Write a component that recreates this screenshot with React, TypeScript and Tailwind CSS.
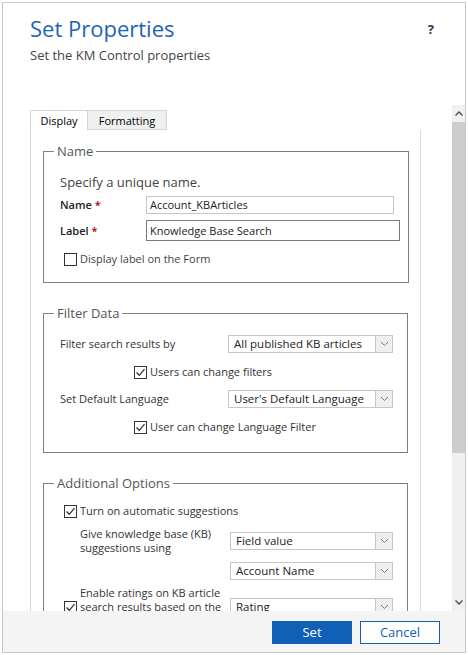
import React from 'react';

const Check = ({ checked }: { checked: boolean }) => (
    <span className="w-[13px] h-[13px] border border-[#333] bg-white flex items-center justify-center shrink-0">
        {checked && (
            <svg width="11" height="11" viewBox="0 0 11 11">
                <path d="M1.5 5.5 L4.3 8.3 L9.5 2.2" fill="none" stroke="#333" strokeWidth="1.3" />
            </svg>
        )}
    </span>
);

const Select = ({ value, className = '' }: { value: string; className?: string }) => (
    <div className={`flex h-[18px] border border-[#c6c6c6] bg-white ${className}`}>
        <span className="flex-1 pl-[5px] text-[11.5px] leading-[16px] text-[#222] truncate">{value}</span>
        <span className="w-[17px] border-l border-[#c6c6c6] bg-[#efefef] flex items-center justify-center">
            <svg width="9" height="6" viewBox="0 0 9 6">
                <path d="M1 1 L4.5 4.5 L8 1" fill="none" stroke="#7a7a7a" strokeWidth="1" />
            </svg>
        </span>
    </div>
);

const Group = ({ title, children, className = '' }: { title: string; children: React.ReactNode; className?: string }) => (
    <fieldset className={`border border-[#7f7f7f] mx-[12px] ${className}`}>
        <legend className="ml-[10px] px-[3px] text-[13px] leading-[16px] text-[#555]">{title}</legend>
        {children}
    </fieldset>
);

export default function App() {
    return (
        <div className="w-[468px] h-[655px] bg-white p-[2px] font-['Open_Sans',sans-serif]">
            <div className="h-[651px] border border-[#c8c8c8] flex flex-col">
                {/* header */}
                <div className="h-[102px] shrink-0 flex justify-between pl-[27px] pr-[31px]">
                    <div>
                        <h1 className="mt-[10px] text-[22px] leading-[30px] text-[#1f63b8]">Set Properties</h1>
                        <p className="mt-[3px] text-[13px] leading-[18px] text-[#444]">Set the KM Control properties</p>
                    </div>
                    <span className="mt-[17px] text-[13px] font-bold text-[#333]">?</span>
                </div>

                {/* body */}
                <div className="flex flex-1 min-h-0">
                    <div className="flex-1 overflow-hidden pl-[27px] pr-[31px] pt-[5px] text-[11px] leading-[18px]">
                        <div className="flex leading-[19px] text-black font-medium">
                            <span className="w-[58px] h-[20px] border border-b-0 border-[#d5d5d5] bg-white text-center">Display</span>
                            <span className="w-[79px] h-[20px] border border-l-0 border-[#d5d5d5] bg-[#f0f0f0] text-center">Formatting</span>
                        </div>
                        <div className="border-x border-[#d9d9d9] pt-[13px] pb-[40px]">
                            <Group title="Name">
                                <div className="pl-[16px] pr-[8px] pt-[14px] pb-[14px] text-[#222]">
                                    <p className="text-[13px] leading-[18px] text-[#444]">Specify a unique name.</p>
                                    <div className="mt-[5px] flex items-center">
                                        <span className="w-[86px] font-semibold">Name <span className="text-[#a80000]">*</span></span>
                                        <div className="w-[248px] h-[18px] border border-[#c6c6c6] pl-[3px] leading-[16px]">Account_KBArticles</div>
                                    </div>
                                    <div className="mt-[6px] flex items-center">
                                        <span className="w-[86px] font-semibold">Label <span className="text-[#a80000]">*</span></span>
                                        <div className="w-[254px] h-[21px] border border-[#7a7a7a] pl-[3px] leading-[19px]">Knowledge Base Search</div>
                                    </div>
                                    <label className="mt-[9px] ml-[4px] flex items-center gap-[3px] text-[#444]">
                                        <Check checked={false} />
                                        <span>Display label on the Form</span>
                                    </label>
                                </div>
                            </Group>

                            <Group title="Filter Data" className="mt-[22px]">
                                <div className="pl-[16px] pr-[14px] pt-[14px] pb-[16px] text-[#333]">
                                    <div className="flex items-center justify-between">
                                        <span>Filter search results by</span>
                                        <Select value="All published KB articles" className="w-[165px]" />
                                    </div>
                                    <label className="mt-[10px] ml-[74px] flex items-center gap-[3px]">
                                        <Check checked />
                                        <span>Users can change filters</span>
                                    </label>
                                    <div className="mt-[9px] flex items-center justify-between">
                                        <span>Set Default Language</span>
                                        <Select value="User's Default Language" className="w-[165px]" />
                                    </div>
                                    <label className="mt-[10px] ml-[74px] flex items-center gap-[3px]">
                                        <Check checked />
                                        <span>User can change Language Filter</span>
                                    </label>
                                </div>
                            </Group>

                            <Group title="Additional Options" className="mt-[22px]">
                                <div className="pl-[20px] pr-[14px] pt-[11px] pb-[16px] text-[#333]">
                                    <label className="flex items-center gap-[3px]">
                                        <Check checked />
                                        <span>Turn on automatic suggestions</span>
                                    </label>
                                    <div className="mt-[7px] pl-[16px] flex justify-between">
                                        <span className="leading-[14px] w-[145px]">Give knowledge base (KB) suggestions using</span>
                                        <div className="mt-[5px] flex flex-col gap-[12px]">
                                            <Select value="Field value" className="w-[163px]" />
                                            <Select value="Account Name" className="w-[163px]" />
                                        </div>
                                    </div>
                                    <div className="mt-[6px] flex items-center justify-between">
                                        <label className="flex items-center gap-[3px]">
                                            <Check checked />
                                            <span className="leading-[14px] w-[145px]">Enable ratings on KB article search results based on the rating value</span>
                                        </label>
                                        <Select value="Rating" className="w-[163px]" />
                                    </div>
                                </div>
                            </Group>
                        </div>
                    </div>

                    {/* scrollbar */}
                    <div className="w-[13px] shrink-0 bg-[#f0f0f0] flex flex-col">
                        <span className="h-[17px] flex items-center justify-center">
                            <svg width="8" height="5" viewBox="0 0 8 5">
                                <path d="M0.5 4.5 L4 1 L7.5 4.5" fill="none" stroke="#555" strokeWidth="1.5" />
                            </svg>
                        </span>
                        <span className="h-[331px] bg-[#cdcdcd]"></span>
                        <span className="flex-1"></span>
                        <span className="h-[17px] flex items-center justify-center">
                            <svg width="8" height="5" viewBox="0 0 8 5">
                                <path d="M0.5 0.5 L4 4 L7.5 0.5" fill="none" stroke="#555" strokeWidth="1.5" />
                            </svg>
                        </span>
                    </div>
                </div>

                {/* footer */}
                <div className="h-[41px] shrink-0 bg-[#f4f4f4] flex items-center justify-end gap-[8px] pr-[25px] pt-[2px] text-[13px]">
                    <button className="w-[80px] h-[23px] bg-[#1160b7] text-white">Set</button>
                    <button className="w-[80px] h-[23px] bg-white border border-[#1160b7] text-[#1160b7]">Cancel</button>
                </div>
            </div>
        </div>
    );
}
